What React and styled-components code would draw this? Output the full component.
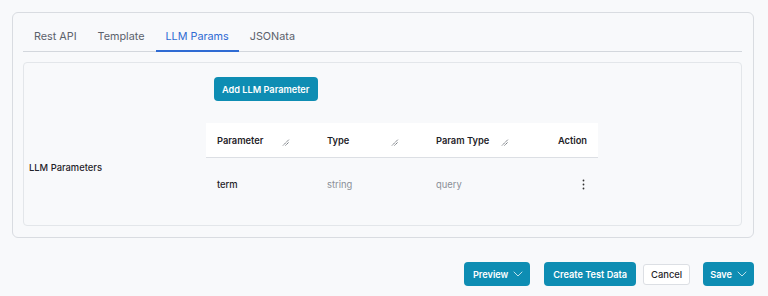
import React from 'react';
import styled, { createGlobalStyle } from 'styled-components';
import { ChevronDown } from 'lucide-react';

const GlobalStyle = createGlobalStyle`
  body {
    margin: 0;
    background: #f8f9fb;
    font-family: Inter, "Noto Sans", sans-serif;
    color: #1f2329;
  }
`;

const Page = styled.div`
  padding: 12px 14px 10px 12px;
`;

const Card = styled.div`
  border: 1px solid #d9dce1;
  border-radius: 6px;
  background: #f8f9fb;
  padding: 10px 11px 11px 10px;
`;

const TabBar = styled.div`
  display: flex;
  gap: 1px;
  border-bottom: 1px solid #d3d7dd;
`;

const Tab = styled.div`
  height: 29px;
  padding: 0 10px;
  display: flex;
  align-items: center;
  font-size: 10.8px;
  color: ${p => (p.$active ? '#2f6bd3' : '#5b616b')};
  border-bottom: 2px solid ${p => (p.$active ? '#2f6bd3' : 'transparent')};
  margin-bottom: -1px;
  box-sizing: border-box;
  &:first-child {
    padding-left: 11px;
  }
`;

const Panel = styled.div`
  margin-top: 10px;
  border: 1px solid #e3e6ea;
  border-radius: 4px;
  padding: 14px 16px 14px 5px;
`;

const Toolbar = styled.div`
  display: flex;
  padding-left: 185px;
  margin-bottom: 22px;
`;

const PrimaryButton = styled.button`
  display: inline-flex;
  align-items: center;
  gap: 2px;
  height: 24px;
  padding: 0 ${p => p.$pr ?? p.$px ?? 9}px 0 ${p => p.$px ?? 9}px;
  border: none;
  border-radius: 4px;
  background: #0e8db3;
  color: #fff;
  font-family: Inter, sans-serif;
  font-size: 9.2px;
  font-weight: 600;
  cursor: pointer;
`;

const GhostButton = styled.button`
  height: 21px;
  padding: 0 7px;
  border: 1px solid #dcdfe4;
  border-radius: 3px;
  background: #fff;
  color: #1f2329;
  font-family: Inter, sans-serif;
  font-size: 9.4px;
  font-weight: 500;
`;

const FieldRow = styled.div`
  display: flex;
  align-items: center;
`;

const Label = styled.div`
  width: 177px;
  font-size: 9.4px;
  font-weight: 500;
`;

const Table = styled.div`
  width: 392px;
  display: grid;
  grid-template-columns: 110px 109px 110px 63px;
`;

const HeadCell = styled.div`
  height: 35px;
  background: #fff;
  border-bottom: 1px solid #dcdfe4;
  display: flex;
  align-items: center;
  justify-content: ${p => (p.$right ? 'flex-end' : 'space-between')};
  padding: 0 ${p => (p.$right ? 11 : 26)}px 0 11px;
  font-size: 9.3px;
  font-weight: 600;
  box-sizing: border-box;
`;

const Cell = styled.div`
  height: 53px;
  display: flex;
  align-items: center;
  justify-content: ${p => (p.$right ? 'flex-end' : 'flex-start')};
  padding: 0 ${p => (p.$right ? 13 : 11)}px 0 11px;
  font-size: 9.4px;
  font-weight: ${p => (p.$strong ? 500 : 400)};
  color: ${p => (p.$muted ? '#8a8f97' : '#1f2329')};
  box-sizing: border-box;
`;

const Footer = styled.div`
  display: flex;
  justify-content: flex-end;
  align-items: center;
  margin-top: 24px;
`;

const ResizeIcon = () => (
  <svg width="8" height="8" viewBox="0 0 8 8" style={{ marginTop: 4 }}>
    <path d="M1 7.5 L7 1.5 M3.5 7.5 L7 4" stroke="#5f646c" strokeWidth="0.9" strokeDasharray="1.6 0.6" fill="none" />
  </svg>
);

const Kebab = () => (
  <svg width="3" height="11" viewBox="0 0 3 11">
    <circle cx="1.5" cy="1.5" r="0.9" fill="#333" />
    <circle cx="1.5" cy="5.5" r="0.9" fill="#333" />
    <circle cx="1.5" cy="9.5" r="0.9" fill="#333" />
  </svg>
);

const tabs = ['Rest API', 'Template', 'LLM Params', 'JSONata'];
const columns = ['Parameter', 'Type', 'Param Type'];

export default function App() {
  return (
    <>
      <GlobalStyle />
      <Page>
        <Card>
          <TabBar>
            {tabs.map(t => (
              <Tab key={t} $active={t === 'LLM Params'}>{t}</Tab>
            ))}
          </TabBar>
          <Panel>
            <Toolbar>
              <PrimaryButton $px={8} $pr={9}>Add LLM Parameter</PrimaryButton>
            </Toolbar>
            <FieldRow>
              <Label>LLM Parameters</Label>
              <Table>
                {columns.map(c => (
                  <HeadCell key={c}>
                    {c}
                    <ResizeIcon />
                  </HeadCell>
                ))}
                <HeadCell $right>Action</HeadCell>
                <Cell $strong>term</Cell>
                <Cell $muted>string</Cell>
                <Cell $muted>query</Cell>
                <Cell $right><Kebab /></Cell>
              </Table>
            </FieldRow>
          </Panel>
        </Card>
        <Footer>
          <PrimaryButton $px={9} $pr={4}>
            Preview <ChevronDown size={16} strokeWidth={1.1} />
          </PrimaryButton>
          <PrimaryButton $px={9} style={{ marginLeft: 14 }}>Create Test Data</PrimaryButton>
          <GhostButton style={{ marginLeft: 7 }}>Cancel</GhostButton>
          <PrimaryButton $px={7} $pr={4} style={{ marginLeft: 13 }}>
            Save <ChevronDown size={16} strokeWidth={1.1} />
          </PrimaryButton>
        </Footer>
      </Page>
    </>
  );
}
